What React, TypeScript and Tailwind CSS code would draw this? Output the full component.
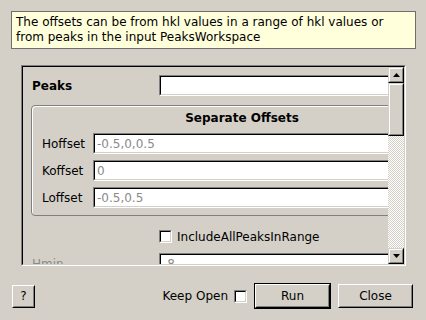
import type { ReactNode } from 'react';

// sunken line edit, Windows-style bevel
const LineEdit = ({ value, className = '' }: { value?: string; className?: string }) => (
  <div className={`h-[21px] border border-t-[#808080] border-l-[#808080] border-b-white border-r-white ${className}`}>
    <div className="h-full border border-t-black border-l-black border-b-[#d4d0c8] border-r-[#d4d0c8] bg-white flex items-center pl-[2px] text-[#8a8a8a] leading-none">
      {value}
    </div>
  </div>
);

const CheckBox = () => (
  <div className="w-[13px] h-[13px] border border-t-[#808080] border-l-[#808080] border-b-white border-r-white">
    <div className="w-full h-full border border-t-black border-l-black border-b-[#d4d0c8] border-r-[#d4d0c8] bg-white" />
  </div>
);

const Button = ({ children, className = '', isDefault = false }: { children: ReactNode; className?: string; isDefault?: boolean }) => (
  <div className={`${isDefault ? 'border border-black' : ''} ${className}`}>
    <div className="h-full border border-t-white border-l-white border-b-black border-r-black">
      <div className="h-full border border-t-[#d4d0c8] border-l-[#d4d0c8] border-b-[#808080] border-r-[#808080] flex items-center justify-center">
        {children}
      </div>
    </div>
  </div>
);

const Arrow = ({ up }: { up?: boolean }) => (
  <svg width="7" height="4" viewBox="0 0 7 4">
    <path d={up ? 'M0 4 L3.5 0 L7 4 Z' : 'M0 0 L7 0 L3.5 4 Z'} fill="black" />
  </svg>
);

const ScrollButton = ({ children, className = '' }: { children?: ReactNode; className?: string }) => (
  <div className={`border border-t-[#d4d0c8] border-l-[#d4d0c8] border-b-black border-r-black ${className}`}>
    <div className="h-full border border-t-white border-l-white border-b-[#808080] border-r-[#808080] bg-[#d4d0c8] flex items-center justify-center">
      {children}
    </div>
  </div>
);

const OffsetRow = ({ label, value }: { label: string; value: string }) => (
  <div className="flex items-center">
    <span className="w-[51px] shrink-0">{label}</span>
    <LineEdit value={value} className="flex-1" />
  </div>
);

export default function App() {
  return (
    <div className="w-[426px] h-[320px] bg-[#d4d0c8] text-black text-[12px] font-['DejaVu_Sans',sans-serif] overflow-hidden flex flex-col">
      {/* description */}
      <div className="mt-[11px] ml-[11px] w-[405px] h-[38px] border border-[#6e6e6e] bg-[#ffffdc] pl-[4px] pt-[3px] leading-[15px]">
        The offsets can be from hkl values in a range of hkl values or
        <br />
        from peaks in the input PeaksWorkspace
      </div>

      {/* scroll area */}
      <div className="mt-[16px] ml-[21px] w-[385px] h-[201px] border border-t-[#808080] border-l-[#808080] border-b-white border-r-white">
        <div className="h-full border border-t-black border-l-black border-b-[#d4d0c8] border-r-[#d4d0c8] flex">
          <div className="flex-1 overflow-hidden">
            <div className="w-[438px] pt-[8px] pl-[8px] pr-[8px] flex flex-col">
              <div className="flex items-center">
                <span className="w-[128px] pl-[1px] font-bold">Peaks</span>
                <LineEdit className="flex-1" />
              </div>

              <div className="mt-[9px] h-[111px] rounded-[4px] border border-[#808080] shadow-[inset_1px_1px_0_white] pl-[10px] pr-[10px] flex flex-col">
                <div className="h-[26px] pt-[5px] text-center font-bold leading-[14px]">Separate Offsets</div>
                <div className="mt-[1px] flex flex-col gap-[6px]">
                  <OffsetRow label="Hoffset" value="-0.5,0,0.5" />
                  <OffsetRow label="Koffset" value="0" />
                  <OffsetRow label="Loffset" value="-0.5,0.5" />
                </div>
              </div>

              <div className="mt-[10px] h-[21px] flex items-center pl-[128px] gap-[5px]">
                <CheckBox />
                <span>IncludeAllPeaksInRange</span>
              </div>

              <div className="mt-[6px] flex items-center">
                <span className="w-[128px] pl-[1px] text-[#8a8a8a]">Hmin</span>
                <LineEdit value="-8" className="flex-1" />
              </div>
            </div>
          </div>

          {/* vertical scrollbar */}
          <div className="w-[16px] shrink-0 flex flex-col">
            <ScrollButton className="h-[16px]">
              <Arrow up />
            </ScrollButton>
            <ScrollButton className="h-[53px]" />
            <div className="flex-1 bg-[repeating-conic-gradient(#ffffff_0_25%,#d4d0c8_0_50%)] bg-[length:2px_2px]" />
            <ScrollButton className="h-[16px]">
              <Arrow />
            </ScrollButton>
          </div>
        </div>
      </div>

      {/* bottom buttons */}
      <div className="mt-[17px] h-[26px] flex items-center pl-[12px] pr-[13px]">
        <Button className="w-[23px] h-[23px]">?</Button>
        <div className="flex-1" />
        <span className="mr-[6px]">Keep Open</span>
        <CheckBox />
        <Button isDefault className="ml-[7px] w-[77px] h-[26px]">Run</Button>
        <Button className="ml-[7px] w-[75px] h-[24px]">Close</Button>
      </div>
    </div>
  );
}
